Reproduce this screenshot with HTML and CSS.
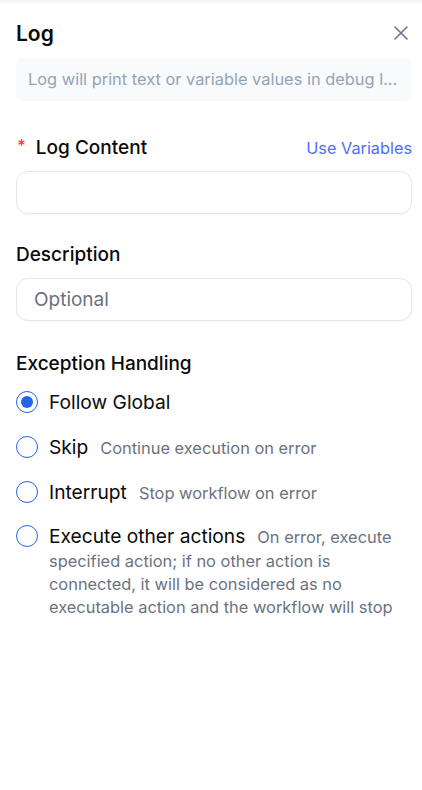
FILE: index.html
```html
<!DOCTYPE html>
<html lang="en">
<head>
<meta charset="utf-8">
<title>Log</title>
<link rel="stylesheet" href="styles.css">
</head>
<body>
<div class="panel">
  <div class="header">
    <h1 class="title">Log</h1>
    <button class="close" aria-label="Close">
      <svg width="14" height="14" viewBox="0 0 14 14"><path d="M1 1L13 13M13 1L1 13" stroke="#64748b" stroke-width="1.6" stroke-linecap="round" fill="none"/></svg>
    </button>
  </div>
  <div class="intro">Log will print text or variable values in debug l...</div>

  <div class="field field-first">
    <div class="label-row">
      <label class="label"><span class="req">*</span>Log Content</label>
      <a class="link">Use Variables</a>
    </div>
    <div class="input"></div>
  </div>

  <div class="field">
    <div class="label-row">
      <label class="label">Description</label>
    </div>
    <div class="input placeholder">Optional</div>
  </div>

  <div class="section">
    <h2 class="section-title">Exception Handling</h2>
    <div class="radios">
      <div class="radio-item">
        <span class="radio checked"></span>
        <p class="radio-text"><span class="radio-label">Follow Global</span></p>
      </div>
      <div class="radio-item">
        <span class="radio"></span>
        <p class="radio-text"><span class="radio-label">Skip</span><span class="radio-desc">Continue execution on error</span></p>
      </div>
      <div class="radio-item">
        <span class="radio"></span>
        <p class="radio-text"><span class="radio-label">Interrupt</span><span class="radio-desc">Stop workflow on error</span></p>
      </div>
      <div class="radio-item">
        <span class="radio"></span>
        <p class="radio-text"><span class="radio-label">Execute other actions</span><span class="radio-desc">On error, execute </span><span class="radio-desc cont">specified action; if no other action is connected, it will be considered as no executable action and the workflow will stop</span></p>
      </div>
    </div>
  </div>
</div>
</body>
</html>
```

FILE: styles.css
```css
* { box-sizing: border-box; }
html, body { margin: 0; padding: 0; background: #ffffff; }
body {
  font-family: Inter, "Noto Sans", "Liberation Sans", sans-serif;
  color: #0a0a0a;
}
.panel {
  min-height: 790px;
  padding: 20px 10px 0 16px;
  background: linear-gradient(to bottom, rgba(0,0,0,0.06), rgba(0,0,0,0) 4px) no-repeat;
}
.header {
  display: flex;
  align-items: center;
  justify-content: space-between;
  height: 28px;
}
.title {
  margin: 0;
  font-size: 21px;
  line-height: 28px;
  font-weight: 600;
}
.close {
  border: 0;
  background: none;
  padding: 0;
  width: 14px;
  height: 14px;
  margin-right: 4px;
  margin-top: -2px;
  display: flex;
}
.intro {
  margin: 10px 0 0 0;
  width: 396px;
  height: 43px;
  padding: 11px 12px;
  background: #f8fafc;
  border-radius: 6px;
  font-size: 16.4px;
  line-height: 21px;
  color: #94a3b8;
  white-space: nowrap;
  overflow: hidden;
}
.field { margin-top: 29px; width: 396px; }
.field-first { margin-top: 35px; }
.label-row {
  display: flex;
  align-items: center;
  justify-content: space-between;
  height: 24px;
  margin-bottom: 11px;
}
.label {
  font-size: 19px;
  line-height: 24px;
  font-weight: 500;
  display: flex;
  align-items: center;
}
.req {
  color: #ef4444;
  font-size: 17px;
  margin-right: 10px;
  margin-left: 1px;
  position: relative;
  top: -2px;
}
.link {
  color: #4f6ef7;
  font-size: 16.3px;
  line-height: 24px;
}
.input {
  height: 43px;
  border: 1px solid #e2e8f0;
  border-radius: 12px;
  box-shadow: 0 1px 2px rgba(15, 23, 42, 0.04);
  background: #fff;
  padding: 0 17px;
  font-size: 19px;
  line-height: 41px;
}
.placeholder { color: #6b7280; }
.section { margin-top: 29px; width: 396px; }
.section-title {
  margin: 0;
  font-size: 19px;
  line-height: 28px;
  font-weight: 500;
}
.radios {
  margin-top: 13px;
  display: flex;
  flex-direction: column;
  gap: 20.5px;
}
.radio-item {
  display: flex;
  align-items: flex-start;
  gap: 11px;
}
.radio {
  flex: none;
  width: 22px;
  height: 22px;
  border: 1.5px solid #2563eb;
  border-radius: 50%;
  margin-top: 0;
  position: relative;
  background: #fff;
}
.radio.checked::after {
  content: "";
  position: absolute;
  left: 3.5px;
  top: 3.5px;
  width: 12px;
  height: 12px;
  border-radius: 50%;
  background: #2563eb;
}
.radio-text {
  margin: 0;
  line-height: 23.3px;
}
.radio-label {
  font-size: 19.2px;
  color: #0a0a0a;
}
.radio-desc {
  font-size: 16.4px;
  color: #6b7280;
  margin-left: 12px;
}
.radio-desc.cont { margin-left: 0; }
```
